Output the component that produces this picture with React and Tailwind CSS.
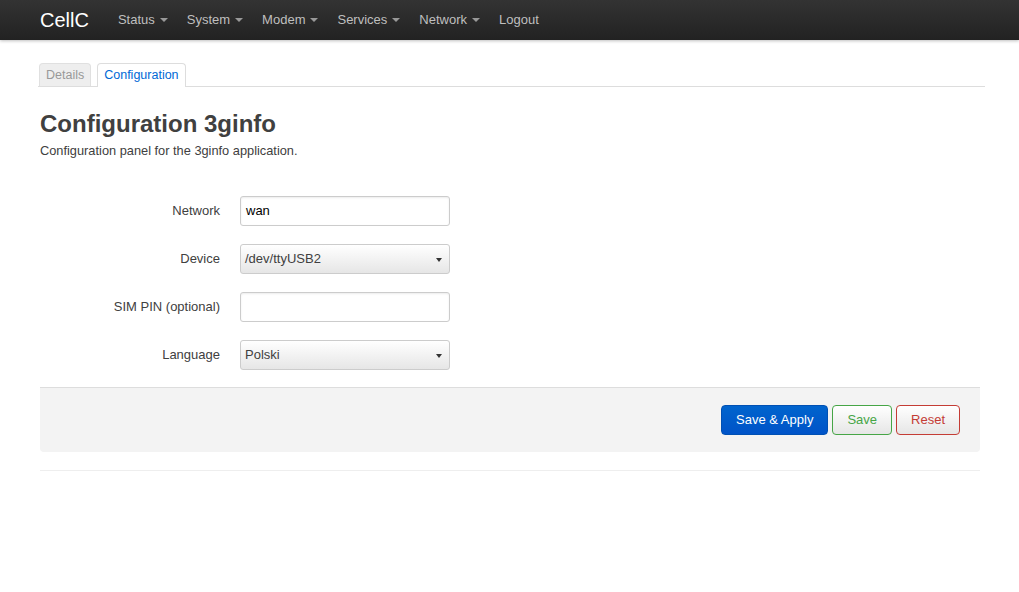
const navItems = ['Status', 'System', 'Modem', 'Services', 'Network']

const Caret = () => (
  <span className="ml-[5px] inline-block w-0 h-0 border-x-[4px] border-x-transparent border-t-[4px] border-t-[#999] align-middle" />
)

const SelectBox = ({ value }) => (
  <div className="relative w-[210px] h-[30px] rounded-[3px] border border-[#ccc] bg-gradient-to-b from-white to-[#e6e6e6] flex items-center px-[4px] text-[13px] text-[#404040]">
    {value}
    <span className="absolute right-[7px] top-[13px] w-0 h-0 border-x-[3px] border-x-transparent border-t-[4px] border-t-[#333]" />
  </div>
)

const Row = ({ label, children, last }) => (
  <div className={`flex items-center h-[30px] ${last ? 'mb-[17px]' : 'mb-[18px]'}`}>
    <label className="w-[180px] text-right text-[13px] text-[#404040]">{label}</label>
    <div className="ml-[20px]">{children}</div>
  </div>
)

export default function App() {
  return (
    <div className="min-h-[592px] bg-white font-['Liberation_Sans',Arial,sans-serif]">
      {/* Navbar */}
      <div className="h-[40px] bg-gradient-to-b from-[#333] to-[#222] shadow-[0_1px_3px_rgba(0,0,0,0.25)] flex items-center pl-[40px]">
        <span className="text-[20px] text-white mr-[29px] leading-none">CellC</span>
        {navItems.map(item => (
          <span key={item} className="text-[13px] text-[#bfbfbf] mr-[19px] flex items-center">
            {item}
            <Caret />
          </span>
        ))}
        <span className="text-[13px] text-[#bfbfbf]">Logout</span>
      </div>

      <div className="pl-[38px] pr-[34px] pt-[23px]">
        {/* Tabs */}
        <div className="flex items-end border-b border-[#ddd] h-[24px]">
          <div className="ml-[1px] h-[23px] px-[6px] bg-[#eee] border border-b-0 border-[#e0e0e0] rounded-t-[4px] text-[12.5px] text-[#999] flex items-center">
            Details
          </div>
          <div className="ml-[6px] h-[24px] -mb-px px-[6px] bg-white border border-b-0 border-[#ddd] rounded-t-[4px] text-[12.5px] text-[#0069d6] flex items-center">
            Configuration
          </div>
        </div>

        <div className="pl-[2px] pr-[5px]">
          <h2 className="mt-[23px] text-[24px] font-bold text-[#404040] leading-[28px]">Configuration 3ginfo</h2>
          <p className="mt-[3px] text-[12.8px] text-[#404040]">Configuration panel for the 3ginfo application.</p>

          {/* Form */}
          <div className="mt-[36px]">
            <Row label="Network">
              <div className="w-[210px] h-[30px] rounded-[3px] border border-[#ccc] shadow-[inset_0_1px_2px_rgba(0,0,0,0.08)] flex items-center px-[5px] text-[13px] text-black">wan</div>
            </Row>
            <Row label="Device">
              <SelectBox value="/dev/ttyUSB2" />
            </Row>
            <Row label="SIM PIN (optional)">
              <div className="w-[210px] h-[30px] rounded-[3px] border border-[#ccc] shadow-[inset_0_1px_2px_rgba(0,0,0,0.08)]" />
            </Row>
            <Row label="Language" last>
              <SelectBox value="Polski" />
            </Row>
          </div>

          {/* Actions */}
          <div className="h-[65px] bg-[#f3f3f3] border-t border-[#ddd] rounded-b-[4px] flex items-center justify-end pr-[20px] gap-[4px]">
            <button className="h-[30px] px-[14px] rounded-[4px] bg-gradient-to-b from-[#0064cd] to-[#0053c8] border border-[#0050b3] text-white text-[13px]">Save &amp; Apply</button>
            <button className="h-[30px] px-[14px] rounded-[4px] bg-gradient-to-b from-white to-[#e6e6e6] border border-[#46a546] text-[#46a546] text-[13px]">Save</button>
            <button className="h-[30px] px-[14px] rounded-[4px] bg-gradient-to-b from-white to-[#e6e6e6] border border-[#c43c35] text-[#c43c35] text-[13px]">Reset</button>
          </div>
          <div className="mt-[18px] border-t border-[#eee]" />
        </div>
      </div>
    </div>
  )
}
